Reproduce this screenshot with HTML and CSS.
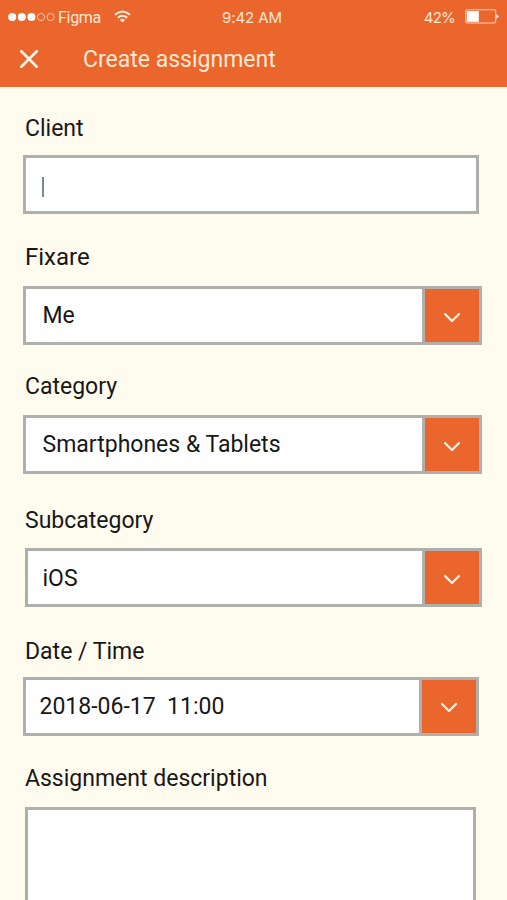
FILE: index.html
```html
<!DOCTYPE html>
<html lang="en">
<head>
<meta charset="utf-8">
<title>Create assignment</title>
<link rel="stylesheet" href="styles.css">
</head>
<body>
<header class="header">
  <div class="status">
    <div class="carrier">
      <svg class="signal" width="47" height="10" viewBox="0 0 47 10"><g fill="#fff"><circle cx="4.2" cy="5" r="4"/><circle cx="13.8" cy="5" r="4"/><circle cx="23.4" cy="5" r="4"/></g><g fill="none" stroke="#fbc4a6" stroke-width="1"><circle cx="33" cy="5" r="3.6"/><circle cx="42.5" cy="5" r="3.6"/></g></svg>
      <span class="network">Figma</span>
      <svg class="wifi" width="17" height="13" viewBox="0 0 17 13"><g fill="none" stroke="#fff0e2" stroke-width="2"><path d="M1 4.7Q8.5-1.8 16 4.7"/><path d="M3.8 7.8Q8.5 3.7 13.2 7.8"/></g><path d="M5.8 9.7Q8.5 7.8 11.2 9.7L8.5 12.5Z" fill="#fff0e2"/></svg>
    </div>
    <span class="clock">9:42 AM</span>
    <div class="power">
      <span class="percent">42%</span>
      <svg width="34" height="15" viewBox="0 0 34 15"><rect x=".7" y=".8" width="30" height="13.2" rx="1.5" fill="none" stroke="#ffd0b5" stroke-width="1.1"/><rect x="1.8" y="2" width="12" height="10.8" fill="#fff"/><path d="M31.2 5L34 7.4L31.2 9.8Z" fill="#fff0e2"/></svg>
    </div>
  </div>
  <div class="titlebar">
    <svg width="18" height="18" viewBox="0 0 18 18"><path d="M1.3 1.3L16.7 16.7M16.7 1.3L1.3 16.7" stroke="#fff6ea" stroke-width="2.7" stroke-linecap="round"/></svg>
    <h1 class="title">Create assignment</h1>
  </div>
</header>
<main class="form">
  <section class="field client">
    <span class="label">Client</span>
    <div class="control"><div class="value"><i class="caret"></i></div></div>
  </section>
  <section class="field fixare">
    <span class="label">Fixare</span>
    <div class="control"><div class="value">Me</div><div class="toggle"><svg class="chevron" width="18" height="12" viewBox="0 0 18 12"><path d="M2 2L9 9L16 2"/></svg></div></div>
  </section>
  <section class="field category">
    <span class="label">Category</span>
    <div class="control"><div class="value">Smartphones &amp; Tablets</div><div class="toggle"><svg class="chevron" width="18" height="12" viewBox="0 0 18 12"><path d="M2 2L9 9L16 2"/></svg></div></div>
  </section>
  <section class="field subcategory">
    <span class="label">Subcategory</span>
    <div class="control"><div class="value">iOS</div><div class="toggle"><svg class="chevron" width="18" height="12" viewBox="0 0 18 12"><path d="M2 2L9 9L16 2"/></svg></div></div>
  </section>
  <section class="field date">
    <span class="label">Date / Time</span>
    <div class="control"><div class="value">2018-06-17&nbsp; 11:00</div><div class="toggle"><svg class="chevron" width="18" height="12" viewBox="0 0 18 12"><path d="M2 2L9 9L16 2"/></svg></div></div>
  </section>
  <section class="field description">
    <span class="label">Assignment description</span>
    <div class="control"></div>
  </section>
</main>
</body>
</html>
```
FILE: styles.css
```css
* { box-sizing: border-box; }
body {
  margin: 0;
  height: 900px;
  overflow: hidden;
  display: flex;
  flex-direction: column;
  background: #fffbee;
  color: #171717;
  font-family: Roboto, sans-serif;
  font-size: 23px;
}
svg { display: block; flex: none; }
.header {
  height: 87px;
  flex: none;
  background: #ea662c;
  color: #ffe9d6;
}
.status {
  height: 34px;
  display: grid;
  grid-template-columns: 1fr auto 1fr;
  align-items: center;
  padding: 0 8px;
  font-family: Inter, Roboto, sans-serif;
  font-size: 15px;
}
.carrier, .power { display: flex; align-items: center; }
.signal, .wifi { margin-bottom: 1px; }
.network {
  width: 56px;
  padding-left: 3px;
  margin-right: 3px;
  font-family: Roboto, sans-serif;
  font-size: 16px;
  letter-spacing: -.3px;
}
.clock { margin-right: 3px; letter-spacing: -.1px; }
.percent { letter-spacing: -.8px; }
.power { justify-content: flex-end; gap: 10px; }
.power svg { margin-bottom: 1px; }
.titlebar {
  height: 51px;
  display: flex;
  align-items: center;
  padding-left: 19.5px;
  gap: 45.5px;
}
.titlebar svg { margin-bottom: 1px; }
.title { margin: 0; font-size: 23px; font-weight: 400; }
.form { padding: 27px 25px 0 22px; flex: 1; }
.field { display: flex; flex-direction: column; height: 129px; }
.label {
  flex: none;
  height: 43px;
  padding-left: 3px;
  line-height: 30px;
}
.control {
  display: flex;
  height: 59px;
  margin-left: .5px;
  border: 3px solid #afafac;
  background: #fff;
}
.value {
  flex: 1;
  display: flex;
  align-items: center;
  padding-left: 17px;
}
.toggle {
  width: 57px;
  display: flex;
  align-items: center;
  justify-content: center;
  padding-top: 4px;
  border-left: 3px solid #afafac;
  background: #ea662c;
}
.chevron path {
  fill: none;
  stroke: #fff0e2;
  stroke-width: 2.3;
  stroke-linecap: round;
  stroke-linejoin: round;
}
.caret { width: 2px; height: 20px; margin: 5px 0 0 -1px; background: #7c8794; }
.client .label { height: 41px; }
.client .control, .date .control { margin-right: 3px; }
.fixare .label { font-size: 24px; line-height: 28px; }
.category { height: 134px; }
.subcategory { height: 131px; }
.subcategory .label { height: 42px; }
.subcategory .control, .description .control { margin-left: 3px; }
.subcategory .value { padding: 2px 0 0 14.5px; }
.date { height: 127px; }
.date .label { height: 40px; }
.date .control { height: 58.5px; }
.date .value { padding-left: 14px; }
.description .control { height: 120px; flex: none; margin-right: 6px; }
```
